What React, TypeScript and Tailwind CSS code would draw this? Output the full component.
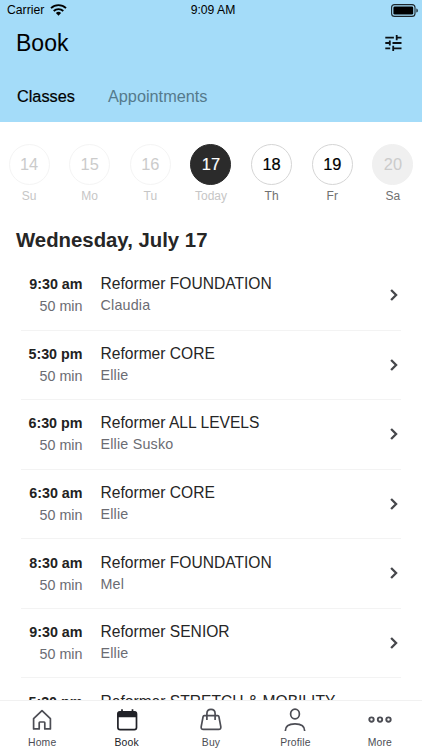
import type { ReactNode } from "react";
import clsx from "clsx";

const days = [
  { n: 14, label: "Su", state: "past" },
  { n: 15, label: "Mo", state: "past" },
  { n: 16, label: "Tu", state: "past" },
  { n: 17, label: "Today", state: "today" },
  { n: 18, label: "Th", state: "open" },
  { n: 19, label: "Fr", state: "open" },
  { n: 20, label: "Sa", state: "closed" },
];

const classes = [
  { time: "9:30 am", name: "Reformer FOUNDATION", coach: "Claudia" },
  { time: "5:30 pm", name: "Reformer CORE", coach: "Ellie" },
  { time: "6:30 pm", name: "Reformer ALL LEVELS", coach: "Ellie Susko" },
  { time: "6:30 am", name: "Reformer CORE", coach: "Ellie" },
  { time: "8:30 am", name: "Reformer FOUNDATION", coach: "Mel" },
  { time: "9:30 am", name: "Reformer SENIOR", coach: "Ellie" },
  { time: "5:30 pm", name: "Reformer STRETCH & MOBILITY" },
];

function WifiIcon() {
  return (
    <svg width="17" height="12" viewBox="0 0 17 12" fill="none" stroke="#000">
      <path d="M1 4.1a10.8 10.8 0 0 1 15 0" strokeWidth="1.8" />
      <path d="M3.7 7a6.9 6.9 0 0 1 9.6 0" strokeWidth="1.8" />
      <path d="M8.5 11.7 5.9 9.1a3.7 3.7 0 0 1 5.2 0z" fill="#000" stroke="none" />
    </svg>
  );
}

function BatteryIcon() {
  return (
    <svg width="28" height="13" viewBox="0 0 28 13">
      <rect x="0.6" y="0.6" width="23.4" height="11.8" rx="3" fill="none" stroke="#1c262b" strokeWidth="1.1" />
      <rect x="2.4" y="2.4" width="19.8" height="8.2" rx="1.4" fill="#000" />
      <path d="M25.4 4.4c1.9.6 1.9 3.6 0 4.2z" fill="#1c262b" />
    </svg>
  );
}

function FilterIcon() {
  return (
    <svg width="17" height="16" viewBox="0 0 17 16" fill="none" stroke="#0b1014" strokeWidth="1.8">
      <path d="M.3 2.6h8.6M11.7 0v5.2M11.7 2.6h4.8M.3 8h4.5M4.8 5.4v5.2M7.5 8h9M.3 13.3h4.9M8.2 10.7v5.2M8.2 13.3h8.3" />
    </svg>
  );
}

const iconProps = { width: 24, height: 24, viewBox: "0 0 24 24", fill: "none", stroke: "#4c4d54", strokeWidth: 1.7 };

const tabs: { label: string; active?: boolean; icon: ReactNode }[] = [
  {
    label: "Home",
    icon: (
      <svg {...iconProps}>
        <path d="M3.6 10.7 12 2.6l8.4 8.1v10.2h-5.6v-6.2q0-.7-.7-.7H9.9q-.7 0-.7.7v6.2H3.6z" strokeLinejoin="round" />
      </svg>
    ),
  },
  {
    label: "Book",
    active: true,
    icon: (
      <svg {...iconProps} stroke="#202127">
        <rect x="2.9" y="3.8" width="18.6" height="17.8" rx="2.2" />
        <path d="M2.5 9.2V5.6q0-2 2-2h15.4q2 0 2 2v3.6z" fill="#202127" stroke="none" />
        <path d="M7 1.3v3M17.5 1.3v3" />
      </svg>
    ),
  },
  {
    label: "Buy",
    icon: (
      <svg {...iconProps}>
        <path d="M5.3 7.7h13.4q1 0 1.2 1l1.9 9.9q.4 2.8-2.2 2.8H4.4q-2.6 0-2.2-2.8l1.9-9.9q.2-1 1.2-1z" />
        <path d="M7.9 12V5.5Q8 1.4 12 1.4t4.1 4.1V12" />
      </svg>
    ),
  },
  {
    label: "Profile",
    icon: (
      <svg {...iconProps}>
        <ellipse cx="12" cy="6" rx="4.4" ry="4.9" />
        <path d="M2.3 22.9C2.3 18 6.2 15.8 12 15.8s9.7 2.2 9.7 7.1" />
      </svg>
    ),
  },
  {
    label: "More",
    icon: (
      <svg {...iconProps} strokeWidth="1.9">
        <circle cx="3.5" cy="11.6" r="2.2" />
        <circle cx="12" cy="11.6" r="2.2" />
        <circle cx="20.5" cy="11.6" r="2.2" />
      </svg>
    ),
  },
];

export default function App() {
  return (
    <div className="flex h-[750px] w-[422px] flex-col overflow-hidden bg-white font-['Liberation_Sans',Arial,sans-serif]">
      <header className="h-[122px] shrink-0 bg-[#a4dcf9] text-black">
        <div className="grid h-5 grid-cols-3 items-center pl-[7px] pr-[3px] text-[12.2px] leading-5">
          <div className="flex items-center gap-[6px]">
            <span>Carrier</span>
            <WifiIcon />
          </div>
          <span className="text-center">9:09 AM</span>
          <div className="flex justify-end">
            <BatteryIcon />
          </div>
        </div>
        <div className="flex h-[45px] items-center justify-between pl-4 pr-5">
          <h1 className="text-[23px] leading-6">Book</h1>
          <FilterIcon />
        </div>
        <nav className="flex h-[62px] items-center gap-[33px] pl-[17px] text-[16.3px]">
          <span className="[-webkit-text-stroke:0.2px_#000]">Classes</span>
          <span className="text-[#557a8c]">Appointments</span>
        </nav>
      </header>

      <div className="flex shrink-0 justify-between px-[8.5px] pt-[22px]">
        {days.map((d) => (
          <div key={d.n} className="flex w-[41px] flex-col items-center">
            <div
              className={clsx(
                "grid h-[41px] w-[41px] place-items-center rounded-full border text-[16.4px]",
                d.state === "past" && "border-[#f4f4f4] text-[#cbcbcb]",
                d.state === "today" && "border-[#2b2b2b] bg-[#2b2b2b] text-white [-webkit-text-stroke:0.2px_#fff]",
                d.state === "open" && "border-[#d5d5d5] text-black [-webkit-text-stroke:0.2px_#000]",
                d.state === "closed" && "border-[#f0f0f0] bg-[#f0f0f0] text-[#cbcbcb]"
              )}
            >
              {d.n}
            </div>
            <span
              className={clsx(
                "mt-[3px] text-[12px] leading-4",
                d.state === "past" || d.state === "today" ? "text-[#c6c6c6]" : "text-[#707070]"
              )}
            >
              {d.label}
            </span>
          </div>
        ))}
      </div>

      <h2 className="mt-[22px] shrink-0 pl-4 text-[20.35px] font-bold leading-7 text-[#262626]">Wednesday, July 17</h2>

      <ul className="min-h-0 flex-1 overflow-hidden pl-[21px] pr-[21px] pt-[7px]">
        {classes.map((c, i) => (
          <li key={i} className="flex h-[69.55px] border-b border-[#f3f3f3]">
            <div className="w-[61.5px] pt-[12.4px] text-right text-[14.3px] leading-[22px]">
              <div className="font-bold text-[#222]">{c.time}</div>
              {c.coach && <div className="text-[#6b6c73]">50 min</div>}
            </div>
            <div className="ml-[18px] flex-1 whitespace-nowrap pt-[12.4px]">
              <div className="text-[15.6px] leading-[22px] text-[#262626]">{c.name}</div>
              <div className="text-[14.3px] leading-5 tracking-[0.2px] text-[#6b6c73]">{c.coach}</div>
            </div>
            <svg width="8" height="12" viewBox="0 0 8 12" className="mr-[3px] self-center" fill="none" stroke="#46474b" strokeWidth="2.3">
              <path d="m1.1 1 5 5-5 5" />
            </svg>
          </li>
        ))}
      </ul>

      <nav className="grid h-[50px] shrink-0 grid-cols-5 border-t border-[#f1f1f1] bg-white">
        {tabs.map((t) => (
          <div key={t.label} className="flex flex-col items-center pt-[7px]">
            {t.icon}
            <span className={clsx("mt-[5px] text-[10.4px] leading-3 tracking-[0.15px]", t.active ? "text-[#202127]" : "text-[#4c4d54]")}>
              {t.label}
            </span>
          </div>
        ))}
      </nav>
    </div>
  );
}
